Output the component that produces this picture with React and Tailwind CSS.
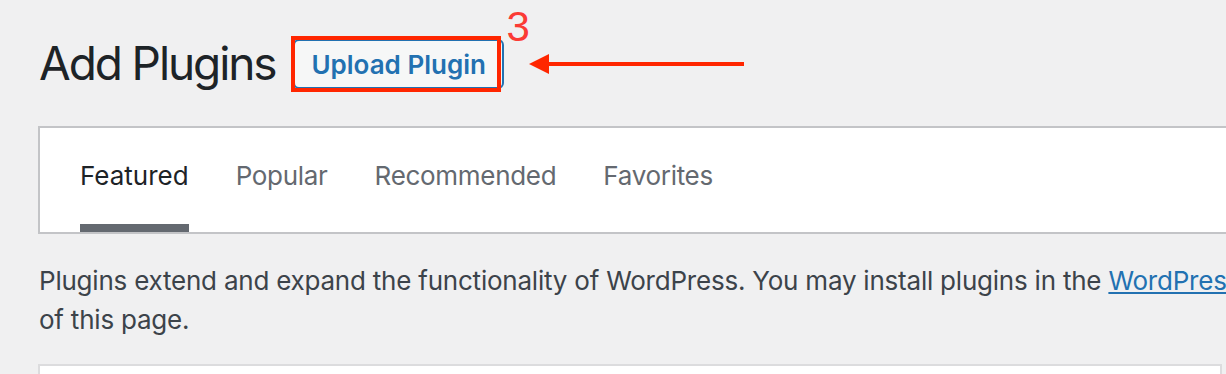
import React from "react";

export default function App() {
  const tabs = ["Featured", "Popular", "Recommended", "Favorites"];
  return (
    <div
      className="w-[1226px] h-[374px] overflow-hidden bg-[#f0f0f1] pl-[38px]"
      style={{ fontFamily: "Inter, 'Noto Sans', sans-serif" }}
    >
      <div className="flex items-start pt-[33px]">
        <h1 className="ml-[1px] text-[46px] leading-[60px] font-normal tracking-[-2.1px] text-[#1d2327] whitespace-nowrap">
          Add Plugins
        </h1>
        <div className="relative ml-[18px] mt-[6px]">
          <a className="flex h-[50px] items-center whitespace-nowrap rounded-[6px] border-2 border-[#2271b1] bg-[#f6f7f7] px-[16px] pt-[2px] text-[26px] leading-[46px] font-semibold text-[#2271b1]">
            Upload Plugin
          </a>
          <div className="absolute left-[-2px] top-[-3px] h-[56px] w-[210px] border-[4px] border-[#ff2600]" />
          <span
            className="absolute left-[213px] top-[-33px] text-[42px] leading-[42px] text-[#fb3b35]"
            style={{ fontFamily: "'Liberation Sans', Arial, sans-serif" }}
          >
            3
          </span>
          <svg
            className="absolute left-[235px] top-[13px]"
            width="218"
            height="24"
            viewBox="0 0 218 24"
          >
            <rect x="20" y="10" width="196" height="4" fill="#ff2600" />
            <polygon points="1,12 21,2 21,22" fill="#ff2600" />
          </svg>
        </div>
      </div>

      <div className="mt-[33px] w-[1260px] border-2 border-[#c3c4c7] bg-white">
        <ul className="flex gap-[47px] pl-[40px]">
          {tabs.map((t, i) => (
            <li key={t}>
              <a
                className={
                  "block pt-[30px] pb-[30px] text-[26px] leading-[36px] border-b-[8px] whitespace-nowrap " +
                  (i === 0
                    ? "tracking-[0px] border-[#646970] text-[#1d2327]"
                    : "tracking-[-0.3px] border-white text-[#646970]")
                }
              >
                {t}
              </a>
            </li>
          ))}
        </ul>
      </div>

      <p className="mt-[27px] ml-[1px] whitespace-nowrap text-[26px] leading-[39px] tracking-[-0.22px] text-[#3c434a]">
        Plugins extend and expand the functionality of WordPress. You may install plugins in the{" "}
        <a className="text-[#2271b1] underline">WordPress Plugin Directory</a> right from here, or
        upload a plugin in .zip format by clicking the button at the top
        <br />
        of this page.
      </p>

      <div className="mt-[25px] h-[60px] w-[1184px] border-2 border-[#dcdcde] bg-white" />
    </div>
  );
}
